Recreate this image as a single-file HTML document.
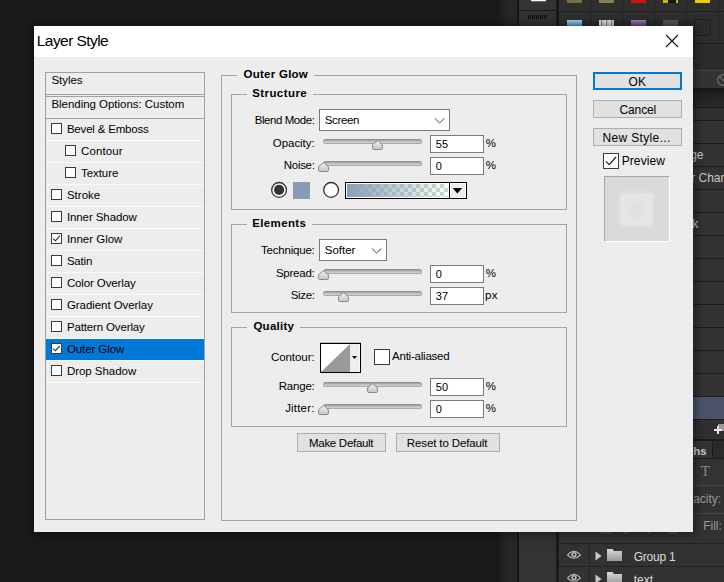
<!DOCTYPE html>
<html><head><meta charset="utf-8"><title>Layer Style</title>
<style>
html,body{margin:0;padding:0}
body{width:724px;height:582px;overflow:hidden;background:#1a1a1a;position:relative;font-family:"Liberation Sans",sans-serif}
div,span.t,svg{position:absolute;box-sizing:border-box}
span.t{white-space:nowrap;line-height:16px;color:#000}
.cb{background:#fff;border:1px solid #3a3a3a}
.in{background:#fff;border:1px solid #7a7a7a}
.trk{border-radius:3px;background:linear-gradient(#9c9c9c,#c6c6c6 60%,#d2d2d2);border:1px solid #aaa;border-top-color:#909090}
.btn{background:#e1e1e1;border:1px solid #adadad}
.ln{background:#a0a0a0}
</style></head><body>
<div style="left:494px;top:0px;width:23px;height:582px;background:linear-gradient(90deg,#181818 0%,#1c1c1c 25%,#262626 55%,#272727 100%)"></div>
<div style="left:517px;top:0px;width:2px;height:582px;background:#161616"></div>
<div style="left:519px;top:0px;width:37px;height:582px;background:#333"></div>
<div style="left:556px;top:0px;width:3px;height:582px;background:#1a1a1a"></div>
<div style="left:559px;top:0px;width:165px;height:582px;background:#323232"></div>
<div style="left:519px;top:10px;width:37px;height:1px;background:#1a1a1a"></div>
<div style="left:531px;top:0px;width:15px;height:1px;background:#f4f4f4"></div>
<div style="left:531px;top:1px;width:15px;height:1px;background:#6a6a6a"></div>
<div style="left:528px;top:15px;width:1px;height:4px;background:#0e0e0e"></div>
<div style="left:530px;top:15px;width:1px;height:4px;background:#0e0e0e"></div>
<div style="left:532px;top:15px;width:1px;height:4px;background:#0e0e0e"></div>
<div style="left:534px;top:15px;width:1px;height:4px;background:#0e0e0e"></div>
<div style="left:536px;top:15px;width:1px;height:4px;background:#0e0e0e"></div>
<div style="left:538px;top:15px;width:1px;height:4px;background:#0e0e0e"></div>
<div style="left:540px;top:15px;width:1px;height:4px;background:#0e0e0e"></div>
<div style="left:542px;top:15px;width:1px;height:4px;background:#0e0e0e"></div>
<div style="left:544px;top:15px;width:1px;height:4px;background:#0e0e0e"></div>
<div style="left:546px;top:15px;width:1px;height:4px;background:#0e0e0e"></div>
<div style="left:559px;top:0px;width:165px;height:43px;background:#2e2e2e"></div>
<div style="left:590px;top:0px;width:1px;height:43px;background:#222"></div>
<div style="left:622px;top:0px;width:1px;height:43px;background:#222"></div>
<div style="left:654px;top:0px;width:1px;height:43px;background:#222"></div>
<div style="left:686px;top:0px;width:1px;height:43px;background:#222"></div>
<div style="left:718px;top:0px;width:1px;height:43px;background:#222"></div>
<div style="left:559px;top:11px;width:165px;height:1px;background:#222"></div>
<div style="left:559px;top:43px;width:165px;height:1px;background:#1c1c1c"></div>
<div style="left:567px;top:0px;width:15px;height:3px;background:#7a6a45"></div>
<div style="left:599px;top:0px;width:15px;height:3px;background:#8a7a55"></div>
<div style="left:631px;top:0px;width:15px;height:3px;background:#d01208"></div>
<div style="left:663px;top:0px;width:15px;height:3px;background:#c8b400"></div>
<div style="left:695px;top:0px;width:15px;height:3px;background:#e8d000"></div>
<div style="left:668px;top:0px;width:8px;height:3px;background:#1a1600"></div>
<div style="left:567px;top:20px;width:15px;height:6px;background:linear-gradient(#a8d4f4,#4e9ee2)"></div>
<div style="left:599px;top:20px;width:15px;height:6px;background:repeating-linear-gradient(90deg,#e8e8e8 0 2px,#8a8a8a 2px 3px,#d0d0d0 3px 5px)"></div>
<div style="left:631px;top:20px;width:15px;height:6px;background:linear-gradient(#a080c0,#6a4a90)"></div>
<div style="left:663px;top:20px;width:15px;height:6px;background:#555"></div>
<div style="left:694px;top:19px;width:17px;height:17px;border:1px solid #1f1f1f;border-radius:2px;background:#2c2c2c"></div>
<div style="left:559px;top:44px;width:165px;height:26px;background:#2b2b2b"></div>
<div style="left:559px;top:70px;width:165px;height:1px;background:#444"></div>
<div style="left:559px;top:71px;width:165px;height:17px;background:#333"></div>
<div style="left:559px;top:88px;width:165px;height:3px;background:#181818"></div>
<div style="left:559px;top:91px;width:165px;height:16px;background:linear-gradient(#1e1e1e,#2a2a2a)"></div>
<div style="left:559px;top:107px;width:165px;height:1px;background:#1a1a1a"></div>
<div style="left:559px;top:108px;width:165px;height:12px;background:#303030"></div>
<div style="left:559px;top:120px;width:165px;height:1px;background:#1d1d1d"></div>
<div style="left:559px;top:143px;width:165px;height:1px;background:#1d1d1d"></div>
<div style="left:559px;top:166px;width:165px;height:1px;background:#1d1d1d"></div>
<div style="left:559px;top:189px;width:165px;height:1px;background:#1d1d1d"></div>
<div style="left:559px;top:212px;width:165px;height:1px;background:#1d1d1d"></div>
<div style="left:559px;top:235px;width:165px;height:1px;background:#1d1d1d"></div>
<div style="left:559px;top:258px;width:165px;height:1px;background:#1d1d1d"></div>
<div style="left:559px;top:281px;width:165px;height:1px;background:#1d1d1d"></div>
<div style="left:559px;top:304px;width:165px;height:1px;background:#1d1d1d"></div>
<div style="left:559px;top:327px;width:165px;height:1px;background:#1d1d1d"></div>
<div style="left:559px;top:350px;width:165px;height:1px;background:#1d1d1d"></div>
<div style="left:559px;top:373px;width:165px;height:1px;background:#1d1d1d"></div>
<div style="left:559px;top:396px;width:165px;height:1px;background:#1d1d1d"></div>
<div style="left:559px;top:397px;width:165px;height:22px;background:#4a5369"></div>
<div style="left:559px;top:419px;width:165px;height:1px;background:#1d1d1d"></div>
<div style="left:559px;top:420px;width:165px;height:19px;background:#2f2f2f"></div>
<div style="left:559px;top:439px;width:165px;height:2px;background:#1b1b1b"></div>
<div style="left:559px;top:441px;width:165px;height:17px;background:#2a2a2a"></div>
<div style="left:559px;top:441px;width:153px;height:17px;background:#333"></div>
<div style="left:712px;top:441px;width:1px;height:17px;background:#1b1b1b"></div>
<div style="left:559px;top:458px;width:165px;height:1px;background:#1b1b1b"></div>
<div style="left:559px;top:459px;width:165px;height:26px;background:#333"></div>
<div style="left:559px;top:485px;width:165px;height:1px;background:#444"></div>
<div style="left:559px;top:513px;width:165px;height:1px;background:#444"></div>
<div style="left:559px;top:543px;width:165px;height:1px;background:#222"></div>
<div style="left:559px;top:566px;width:165px;height:1px;background:#222"></div>
<div style="left:589px;top:544px;width:1px;height:38px;background:#262626"></div>
<svg style="left:716px;top:73px" width="14" height="14" viewBox="0 0 16 16"><circle cx="8" cy="8" r="6" fill="none" stroke="#6a6a6a" stroke-width="1.6"/><path d="M4 4 L12 12" stroke="#6a6a6a" stroke-width="1.6"/></svg>
<svg style="left:714px;top:423px" width="12" height="14" viewBox="0 0 12 14"><rect x="4" y="1" width="8" height="7" fill="#9a9a9a"/><path d="M4 3 V11 M0 7 H8" stroke="#e8e8e8" stroke-width="2"/></svg>
<svg style="left:567px;top:550px" width="14" height="10" viewBox="0 0 14 10"><path d="M0.5 5 Q7 -2.5 13.5 5 Q7 11.5 0.5 5 Z" fill="#2d2d2d" stroke="#b8b8b8" stroke-width="1.1"/><circle cx="7" cy="4.6" r="2.7" fill="#b8b8b8"/><circle cx="7" cy="4.6" r="1.1" fill="#333"/></svg>
<svg style="left:567px;top:573px" width="14" height="10" viewBox="0 0 14 10"><path d="M0.5 5 Q7 -2.5 13.5 5 Q7 11.5 0.5 5 Z" fill="#2d2d2d" stroke="#b8b8b8" stroke-width="1.1"/><circle cx="7" cy="4.6" r="2.7" fill="#b8b8b8"/><circle cx="7" cy="4.6" r="1.1" fill="#333"/></svg>
<svg style="left:595px;top:551px" width="8" height="10" viewBox="0 0 8 10"><path d="M0.5 0.5 L6.5 5 L0.5 9.5 Z" fill="#c8c8c8"/></svg>
<svg style="left:595px;top:574px" width="8" height="10" viewBox="0 0 8 10"><path d="M0.5 0.5 L6.5 5 L0.5 9.5 Z" fill="#c8c8c8"/></svg>
<svg style="left:607px;top:549px" width="15" height="12" viewBox="0 0 15 12"><defs><linearGradient id="fg549" x1="0" y1="0" x2="0" y2="1"><stop offset="0" stop-color="#d8d8d8"/><stop offset="1" stop-color="#9a9a9a"/></linearGradient></defs><path d="M0 0 H5.5 L7 2 H15 V12 H0 Z" fill="url(#fg549)"/></svg>
<svg style="left:607px;top:572px" width="15" height="12" viewBox="0 0 15 12"><defs><linearGradient id="fg572" x1="0" y1="0" x2="0" y2="1"><stop offset="0" stop-color="#d8d8d8"/><stop offset="1" stop-color="#9a9a9a"/></linearGradient></defs><path d="M0 0 H5.5 L7 2 H15 V12 H0 Z" fill="url(#fg572)"/></svg>
<div style="left:601px;top:532px;width:11px;height:2px;background:#484848"></div>
<div style="left:623px;top:532px;width:6px;height:2px;background:#484848"></div>
<div style="left:648px;top:532px;width:2px;height:2px;background:#484848"></div>
<div style="left:668px;top:532px;width:10px;height:2px;background:#484848"></div>
<span class="t" style="left:686.2px;top:124px;font-size:12px;color:#c8c8c8;">n</span>
<span class="t" style="left:690.2px;top:147px;font-size:12px;color:#c8c8c8;">ge</span>
<span class="t" style="left:691.2px;top:170px;font-size:12px;color:#c8c8c8;">r Chan</span>
<span class="t" style="left:692.2px;top:216px;font-size:12px;color:#c8c8c8;">k</span>
<span class="t" style="left:693.2px;top:443px;font-size:11.5px;font-weight:700;color:#c8c8c8;">hs</span>
<span class="t" style="left:700.7px;top:463px;font-size:15px;color:#8a8a8a;font-family:'Liberation Serif',serif;">T</span>
<span class="t" style="left:693.2px;top:491px;font-size:12px;color:#9a9a9a;">acity:</span>
<span class="t" style="left:703.2px;top:518px;font-size:12px;color:#9a9a9a;">Fill:</span>
<span class="t" style="left:633.7px;top:549px;font-size:12px;color:#dcdcdc;letter-spacing:-0.24px;">Group 1</span>
<span class="t" style="left:633.7px;top:572px;font-size:12px;color:#dcdcdc;">text</span>
<div style="left:34px;top:26px;width:659px;height:506px;background:#ededed;box-shadow:0 0 9px 1px rgba(0,0,0,.55)"></div>
<div style="left:34px;top:26px;width:659px;height:31px;background:#fff"></div>
<svg style="left:665px;top:34px" width="14" height="14" viewBox="0 0 14 14"><path d="M1 1 L13 13 M13 1 L1 13" stroke="#111" stroke-width="1.1" fill="none"/></svg>
<div style="left:45px;top:72px;width:160px;height:448px;border:1px solid #a0a0a0"></div>
<div style="left:46px;top:94px;width:158px;height:1px;background:#a0a0a0"></div>
<div style="left:46px;top:96px;width:158px;height:1px;background:#a0a0a0"></div>
<div style="left:46px;top:118px;width:158px;height:1px;background:#a0a0a0"></div>
<div style="left:46px;top:140px;width:158px;height:1px;background:#f9f9f9"></div>
<div style="left:46px;top:162px;width:158px;height:1px;background:#f9f9f9"></div>
<div style="left:46px;top:184px;width:158px;height:1px;background:#f9f9f9"></div>
<div style="left:46px;top:206px;width:158px;height:1px;background:#f9f9f9"></div>
<div style="left:46px;top:228px;width:158px;height:1px;background:#f9f9f9"></div>
<div style="left:46px;top:250px;width:158px;height:1px;background:#f9f9f9"></div>
<div style="left:46px;top:272px;width:158px;height:1px;background:#f9f9f9"></div>
<div style="left:46px;top:294px;width:158px;height:1px;background:#f9f9f9"></div>
<div style="left:46px;top:316px;width:158px;height:1px;background:#f9f9f9"></div>
<div style="left:46px;top:338px;width:158px;height:1px;background:#f9f9f9"></div>
<div style="left:46px;top:360px;width:158px;height:1px;background:#f9f9f9"></div>
<div style="left:46px;top:382px;width:158px;height:1px;background:#f9f9f9"></div>
<div style="left:46px;top:339px;width:158px;height:21px;background:#0078d7"></div>
<div class="cb" style="left:51px;top:123px;width:11px;height:11px;"></div>
<div class="cb" style="left:65px;top:145px;width:11px;height:11px;"></div>
<div class="cb" style="left:65px;top:167px;width:11px;height:11px;"></div>
<div class="cb" style="left:51px;top:189px;width:11px;height:11px;"></div>
<div class="cb" style="left:51px;top:211px;width:11px;height:11px;"></div>
<div class="cb" style="left:51px;top:233px;width:11px;height:11px;"></div>
<svg style="left:51px;top:233px" width="11" height="11" viewBox="0 0 11 11"><path d="M2.2 5.6 L4.4 7.8 L8.8 2.8" stroke="#222" stroke-width="1.1" fill="none"/></svg>
<div class="cb" style="left:51px;top:255px;width:11px;height:11px;"></div>
<div class="cb" style="left:51px;top:277px;width:11px;height:11px;"></div>
<div class="cb" style="left:51px;top:299px;width:11px;height:11px;"></div>
<div class="cb" style="left:51px;top:321px;width:11px;height:11px;"></div>
<div class="cb" style="left:51px;top:343px;width:11px;height:11px;"></div>
<svg style="left:51px;top:343px" width="11" height="11" viewBox="0 0 11 11"><path d="M2.2 5.6 L4.4 7.8 L8.8 2.8" stroke="#222" stroke-width="1.1" fill="none"/></svg>
<div class="cb" style="left:51px;top:365px;width:11px;height:11px;"></div>
<div style="left:221px;top:75px;width:356px;height:446px;border:1px solid #a3a3a3"></div>
<div style="left:237px;top:75px;width:77px;height:1px;background:#ededed"></div>
<div style="left:231px;top:94px;width:336px;height:116px;border:1px solid #a3a3a3"></div>
<div style="left:247px;top:94px;width:66px;height:1px;background:#ededed"></div>
<div style="left:231px;top:224px;width:336px;height:89px;border:1px solid #a3a3a3"></div>
<div style="left:247px;top:224px;width:65px;height:1px;background:#ededed"></div>
<div style="left:231px;top:327px;width:336px;height:100px;border:1px solid #a3a3a3"></div>
<div style="left:247px;top:327px;width:53px;height:1px;background:#ededed"></div>
<div class="in" style="left:319px;top:109px;width:131px;height:22px;"></div>
<svg style="left:434px;top:117px" width="11" height="7" viewBox="0 0 11 7"><path d="M0.9 1.4 L5.6 6.0 L10.3 1.4" stroke="#444" stroke-width="1" fill="none"/></svg>
<div class="in" style="left:319px;top:239px;width:68px;height:22px;"></div>
<svg style="left:371px;top:247px" width="11" height="7" viewBox="0 0 11 7"><path d="M0.9 1.4 L5.6 6.0 L10.3 1.4" stroke="#444" stroke-width="1" fill="none"/></svg>
<svg width="0" height="0" style="left:0;top:0"><defs><linearGradient id="tg" x1="0" y1="0" x2="0" y2="1"><stop offset="0" stop-color="#f2f2f2"/><stop offset="1" stop-color="#c6c6c6"/></linearGradient></defs></svg>
<div class="trk" style="left:323px;top:139px;width:99px;height:5px;"></div>
<svg style="left:372px;top:140px" width="11" height="10" viewBox="0 0 11 10"><path d="M5.5 0.6 L10.4 4.6 V8.4 Q10.4 9.5 9.3 9.5 H1.7 Q0.6 9.5 0.6 8.4 V4.6 Z" fill="url(#tg)" stroke="#888" stroke-width="1"/></svg>
<div class="trk" style="left:323px;top:161px;width:99px;height:5px;"></div>
<svg style="left:318px;top:162px" width="11" height="10" viewBox="0 0 11 10"><path d="M5.5 0.6 L10.4 4.6 V8.4 Q10.4 9.5 9.3 9.5 H1.7 Q0.6 9.5 0.6 8.4 V4.6 Z" fill="url(#tg)" stroke="#888" stroke-width="1"/></svg>
<div class="trk" style="left:323px;top:269px;width:99px;height:5px;"></div>
<svg style="left:318px;top:270px" width="11" height="10" viewBox="0 0 11 10"><path d="M5.5 0.6 L10.4 4.6 V8.4 Q10.4 9.5 9.3 9.5 H1.7 Q0.6 9.5 0.6 8.4 V4.6 Z" fill="url(#tg)" stroke="#888" stroke-width="1"/></svg>
<div class="trk" style="left:323px;top:291px;width:99px;height:5px;"></div>
<svg style="left:338px;top:292px" width="11" height="10" viewBox="0 0 11 10"><path d="M5.5 0.6 L10.4 4.6 V8.4 Q10.4 9.5 9.3 9.5 H1.7 Q0.6 9.5 0.6 8.4 V4.6 Z" fill="url(#tg)" stroke="#888" stroke-width="1"/></svg>
<div class="trk" style="left:323px;top:382px;width:99px;height:5px;"></div>
<svg style="left:367px;top:383px" width="11" height="10" viewBox="0 0 11 10"><path d="M5.5 0.6 L10.4 4.6 V8.4 Q10.4 9.5 9.3 9.5 H1.7 Q0.6 9.5 0.6 8.4 V4.6 Z" fill="url(#tg)" stroke="#888" stroke-width="1"/></svg>
<div class="trk" style="left:323px;top:404px;width:99px;height:5px;"></div>
<svg style="left:318px;top:405px" width="11" height="10" viewBox="0 0 11 10"><path d="M5.5 0.6 L10.4 4.6 V8.4 Q10.4 9.5 9.3 9.5 H1.7 Q0.6 9.5 0.6 8.4 V4.6 Z" fill="url(#tg)" stroke="#888" stroke-width="1"/></svg>
<div class="in" style="left:430px;top:135px;width:54px;height:18px;"></div>
<div class="in" style="left:430px;top:157px;width:54px;height:18px;"></div>
<div class="in" style="left:430px;top:265px;width:54px;height:18px;"></div>
<div class="in" style="left:430px;top:287px;width:54px;height:18px;"></div>
<div class="in" style="left:430px;top:378px;width:54px;height:18px;"></div>
<div class="in" style="left:430px;top:400px;width:54px;height:18px;"></div>
<svg style="left:270px;top:181px" width="18" height="18" viewBox="0 0 18 18"><circle cx="9.1" cy="8.9" r="7.4" fill="#fff" stroke="#333" stroke-width="1.3"/><circle cx="9.1" cy="8.9" r="5.1" fill="#333"/></svg>
<div style="left:293px;top:182px;width:17px;height:17px;background:#869bb8;border:1px solid #9a9a9a"></div>
<svg style="left:322px;top:181px" width="18" height="18" viewBox="0 0 18 18"><circle cx="9.1" cy="8.9" r="7.4" fill="#fff" stroke="#333" stroke-width="1.3"/></svg>
<div style="left:345px;top:182px;width:122px;height:17px;background:#ededed;border:1px solid #000"></div>
<div style="left:347px;top:184px;width:101px;height:13px;background:repeating-conic-gradient(#c2dec2 0% 25%,#fff 0% 50%) 1px 0/8px 8px"></div>
<div style="left:347px;top:184px;width:101px;height:13px;background:linear-gradient(90deg,#8a9db8 0%,rgba(138,157,184,0) 100%)"></div>
<div style="left:346px;top:183px;width:103px;height:15px;border:1px solid #fff"></div>
<div style="left:449px;top:183px;width:1px;height:15px;background:#000"></div>
<div style="left:450px;top:183px;width:16px;height:15px;border:1px solid #fff"></div>
<svg style="left:452px;top:188px" width="11" height="6" viewBox="0 0 11 6"><path d="M0.6 0 H10.2 L5.4 5.4 Z" fill="#000"/></svg>
<div style="left:320px;top:342px;width:41px;height:1px;background:#bdbdbd"></div>
<div style="left:320px;top:343px;width:41px;height:30px;background:#ededed;border:1px solid #000"></div>
<svg style="left:321px;top:344px" width="29" height="28" viewBox="0 0 29 28"><rect width="29" height="28" fill="#fff"/><path d="M29 0 V28 H0 Z" fill="#9a9a9a"/></svg>
<div style="left:359px;top:344px;width:1px;height:28px;background:#f8f8f8"></div>
<svg style="left:352px;top:356px" width="5" height="3" viewBox="0 0 5 3"><path d="M0 0 H5 L2.5 3 Z" fill="#000"/></svg>
<div class="cb" style="left:374px;top:349px;width:16px;height:16px;"></div>
<div class="btn" style="left:297px;top:433px;width:89px;height:19px;"></div>
<div class="btn" style="left:396px;top:433px;width:104px;height:19px;"></div>
<div class="btn" style="left:593px;top:72px;width:89px;height:18px;border:2px solid #0078d7"></div>
<div class="btn" style="left:593px;top:100px;width:89px;height:18px;"></div>
<div class="btn" style="left:593px;top:128px;width:89px;height:18px;"></div>
<div class="cb" style="left:603px;top:153px;width:16px;height:16px;"></div>
<svg style="left:603px;top:153px" width="16" height="16" viewBox="0 0 16 16"><path d="M3 8.4 L6.2 11.6 L13 4" stroke="#222" stroke-width="1.3" fill="none"/></svg>
<div style="left:604px;top:176px;width:66px;height:66px;background:#d9d9d9;border:1px solid #a8a8a8;border-right-color:#fff;border-bottom-color:#fff"></div>
<div style="left:621px;top:194px;width:31px;height:31px;background:radial-gradient(circle,#dfdfdf 0%,#e5e5e5 55%,#e7e7e7 100%);box-shadow:0 0 5px 1px rgba(232,232,232,.9)"></div>
<span class="t" style="left:66.9px;top:121px;font-size:11.5px;letter-spacing:-0.19px;">Bevel &amp; Emboss</span>
<span class="t" style="left:81.0px;top:143px;font-size:11.5px;letter-spacing:0.10px;">Contour</span>
<span class="t" style="left:81.0px;top:165px;font-size:11.5px;letter-spacing:-0.07px;">Texture</span>
<span class="t" style="left:66.9px;top:187px;font-size:11.5px;letter-spacing:0.02px;">Stroke</span>
<span class="t" style="left:66.9px;top:209px;font-size:11.5px;letter-spacing:-0.09px;">Inner Shadow</span>
<span class="t" style="left:66.9px;top:231px;font-size:11.5px;letter-spacing:-0.01px;">Inner Glow</span>
<span class="t" style="left:66.9px;top:253px;font-size:11.5px;letter-spacing:-0.20px;">Satin</span>
<span class="t" style="left:66.9px;top:275px;font-size:11.5px;letter-spacing:-0.12px;">Color Overlay</span>
<span class="t" style="left:66.9px;top:297px;font-size:11.5px;letter-spacing:-0.06px;">Gradient Overlay</span>
<span class="t" style="left:66.9px;top:319px;font-size:11.5px;letter-spacing:-0.14px;">Pattern Overlay</span>
<span class="t" style="left:66.9px;top:341px;font-size:11.5px;letter-spacing:-0.09px;">Outer Glow</span>
<span class="t" style="left:66.9px;top:363px;font-size:11.5px;letter-spacing:-0.03px;">Drop Shadow</span>
<span class="t" style="left:51.4px;top:72px;font-size:11.5px;letter-spacing:-0.02px;">Styles</span>
<span class="t" style="left:51.4px;top:96px;font-size:11.5px;letter-spacing:-0.03px;">Blending Options: Custom</span>
<span class="t" style="left:243.5px;top:66px;font-size:11.5px;font-weight:700;letter-spacing:0.26px;">Outer Glow</span>
<span class="t" style="left:252.2px;top:85px;font-size:11.5px;font-weight:700;letter-spacing:0.42px;">Structure</span>
<span class="t" style="left:252.2px;top:215px;font-size:11.5px;font-weight:700;letter-spacing:0.38px;">Elements</span>
<span class="t" style="left:253.4px;top:318px;font-size:11.5px;font-weight:700;letter-spacing:0.26px;">Quality</span>
<span class="t" style="left:254.7px;top:112px;font-size:11.5px;letter-spacing:-0.43px;">Blend Mode:</span>
<span class="t" style="left:272.8px;top:135px;font-size:11.5px;letter-spacing:-0.05px;">Opacity:</span>
<span class="t" style="left:283.8px;top:157px;font-size:11.5px;letter-spacing:-0.30px;">Noise:</span>
<span class="t" style="left:260.9px;top:242px;font-size:11.5px;letter-spacing:-0.19px;">Technique:</span>
<span class="t" style="left:275.9px;top:265px;font-size:11.5px;letter-spacing:-0.23px;">Spread:</span>
<span class="t" style="left:290.8px;top:287px;font-size:11.5px;letter-spacing:-0.36px;">Size:</span>
<span class="t" style="left:270.9px;top:349px;font-size:11.5px;letter-spacing:-0.05px;">Contour:</span>
<span class="t" style="left:278.7px;top:378px;font-size:11.5px;letter-spacing:-0.20px;">Range:</span>
<span class="t" style="left:285.2px;top:400px;font-size:11.5px;letter-spacing:0.18px;">Jitter:</span>
<span class="t" style="left:324.8px;top:112px;font-size:11.5px;letter-spacing:-0.36px;">Screen</span>
<span class="t" style="left:324.8px;top:242px;font-size:11.5px;letter-spacing:-0.03px;">Softer</span>
<span class="t" style="left:435.8px;top:136px;font-size:11px;">55</span>
<span class="t" style="left:485.7px;top:135px;font-size:11.5px;">%</span>
<span class="t" style="left:435.8px;top:158px;font-size:11px;">0</span>
<span class="t" style="left:485.7px;top:157px;font-size:11.5px;">%</span>
<span class="t" style="left:435.8px;top:266px;font-size:11px;">0</span>
<span class="t" style="left:485.7px;top:265px;font-size:11.5px;">%</span>
<span class="t" style="left:435.8px;top:288px;font-size:11px;">37</span>
<span class="t" style="left:485.0px;top:287px;font-size:11.5px;letter-spacing:0.47px;">px</span>
<span class="t" style="left:435.8px;top:379px;font-size:11px;">50</span>
<span class="t" style="left:485.7px;top:378px;font-size:11.5px;">%</span>
<span class="t" style="left:435.8px;top:401px;font-size:11px;">0</span>
<span class="t" style="left:485.7px;top:400px;font-size:11.5px;">%</span>
<span class="t" style="left:392.0px;top:348px;font-size:11.5px;letter-spacing:-0.22px;">Anti-aliased</span>
<span class="t" style="left:309.0px;top:435px;font-size:11.5px;letter-spacing:-0.29px;">Make Default</span>
<span class="t" style="left:406.8px;top:435px;font-size:11.5px;letter-spacing:-0.12px;">Reset to Default</span>
<span class="t" style="left:628.6px;top:74px;font-size:12px;letter-spacing:0.03px;">OK</span>
<span class="t" style="left:619.6px;top:102px;font-size:12px;letter-spacing:-0.16px;">Cancel</span>
<span class="t" style="left:602.4px;top:130px;font-size:12px;letter-spacing:0.36px;">New Style...</span>
<span class="t" style="left:621.7px;top:153px;font-size:12px;letter-spacing:0.09px;">Preview</span>
<span class="t" style="left:36.8px;top:33px;font-size:15.5px;letter-spacing:-0.56px;">Layer Style</span>
</body></html>
